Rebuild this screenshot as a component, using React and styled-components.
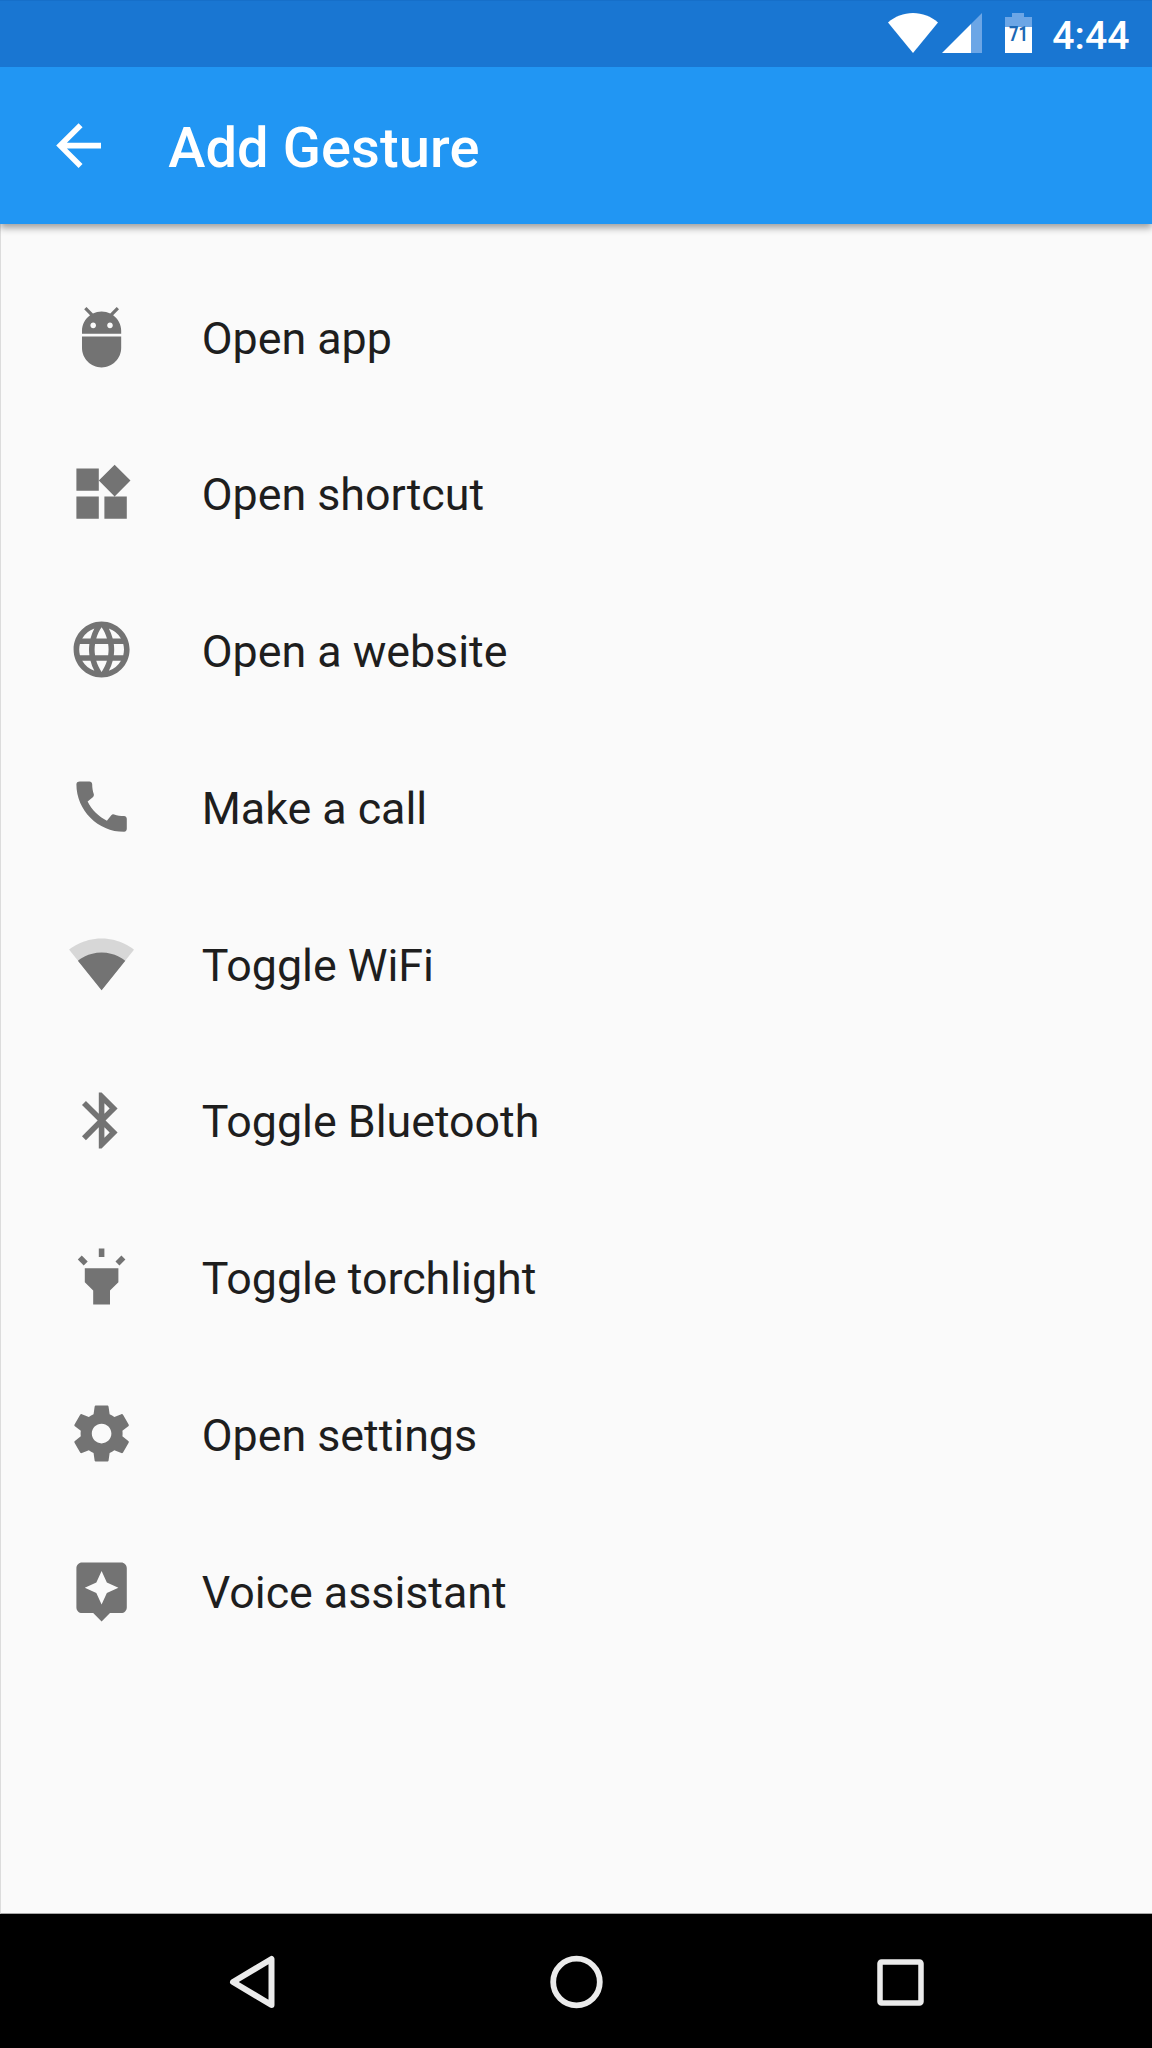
import React from "react";
import styled, { createGlobalStyle } from "styled-components";
import {
  MdAdb,
  MdArrowBack,
  MdAssistant,
  MdBluetooth,
  MdCall,
  MdLanguage,
  MdWidgets,
} from "react-icons/md";

const GlobalStyle = createGlobalStyle`
  body {
    margin: 0;
    background: #fafafa;
    font-family: Roboto, "Noto Sans", sans-serif;
  }

  svg {
    display: block;
    flex-shrink: 0;
  }
`;

const Screen = styled.div`
  box-sizing: border-box;
  display: flex;
  flex-direction: column;
  width: 1152px;
  height: 2048px;
  overflow: hidden;
  background: #fafafa;
`;

const StatusBar = styled.div`
  box-sizing: border-box;
  display: flex;
  justify-content: flex-end;
  height: 67px;
  padding: 13px 22.5px 0 0;
  border-top: 1px solid #166fc9;
  background: #1976d2;
  z-index: 2;
`;

const StatusIcon = styled.svg`
  width: ${(props) => props.$width}px;
  height: 40px;
  margin: -1px ${(props) => props.$gap}px 0 0;
`;

const Clock = styled.span`
  color: #fff;
  font-size: 39.2px;
  font-weight: 500;
  line-height: 44px;
`;

const AppBar = styled.header`
  display: flex;
  align-items: center;
  height: 157px;
  padding-left: 45px;
  color: #fff;
  background: #2196f3;
  box-shadow: 0 4px 7px rgba(0, 0, 0, 0.36);
  z-index: 1;
`;

const Title = styled.h1`
  margin: 5px 0 0 56px;
  font-size: 56px;
  font-weight: 500;
  line-height: 66px;
  letter-spacing: 0.1px;
`;

const List = styled.ul`
  flex: 1;
  margin: 0;
  padding: 34px 0 0 66.8px;
  border-left: 1px solid #dcdcdc;
  border-bottom: 1px solid #a8a8a8;
  list-style: none;
`;

const Row = styled.li`
  display: flex;
  align-items: center;
  height: 156.75px;
  color: #737373;
`;

const Label = styled.span`
  margin: 4.6px 0 0 66.8px;
  color: #1e1e1e;
  font-size: 44.8px;
  line-height: 52px;
  letter-spacing: -0.03px;
`;

const NavBar = styled.nav`
  box-sizing: border-box;
  display: flex;
  height: 134px;
  padding: 1px 90px 0;
  background: #000;
`;

const NavButton = styled.div`
  display: flex;
  align-items: center;
  justify-content: center;
  flex: 1;
  color: #ebebeb;
`;

const ICON_SIZE = 67.2;

const WifiIcon = ({ size }) => (
  <svg width={size} height={size} viewBox="0 0 24 24" fill="currentColor">
    <path
      fillOpacity="0.26"
      d="M23.64 7c-.45-.34-4.93-4-11.64-4C5.28 3 .81 6.66.36 7L12 21.5 23.64 7z"
    />
    <path d="M3.53 10.95l8.46 10.54.01.01.01-.01 8.46-10.54C20.04 10.62 16.81 8 12 8c-4.81 0-8.04 2.62-8.47 2.95z" />
  </svg>
);

const TorchIcon = ({ size }) => (
  <svg width={size} height={size} viewBox="0 0 24 24" fill="currentColor">
    <path d="M6 14l3 3v5h6v-5l3-3V9H6zm5-12h2v3h-2zM3.5 5.875L4.914 4.46l2.12 2.122L5.62 7.997zm13.46.71l2.123-2.12 1.414 1.414L18.375 8z" />
  </svg>
);

const GearIcon = ({ size }) => (
  <svg width={size} height={size} viewBox="0 0 24 24" fill="currentColor">
    <path d="M19.43 12.98c.04-.32.07-.64.07-.98s-.03-.66-.07-.98l2.11-1.65c.19-.15.24-.42.12-.64l-2-3.46c-.12-.22-.39-.3-.61-.22l-2.49 1c-.52-.4-1.08-.73-1.69-.98l-.38-2.65C14.46 2.18 14.25 2 14 2h-4c-.25 0-.46.18-.49.42l-.38 2.65c-.61.25-1.17.59-1.69.98l-2.49-1c-.23-.09-.49 0-.61.22l-2 3.46c-.13.22-.07.49.12.64l2.11 1.65c-.04.32-.07.65-.07.98s.03.66.07.98l-2.11 1.65c-.19.15-.24.42-.12.64l2 3.46c.12.22.39.3.61.22l2.49-1c.52.4 1.08.73 1.69.98l.38 2.65c.03.24.24.42.49.42h4c.25 0 .46-.18.49-.42l.38-2.65c.61-.25 1.17-.59 1.69-.98l2.49 1c.23.09.49 0 .61-.22l2-3.46c.12-.22.07-.49-.12-.64l-2.11-1.65zM12 15.5c-1.93 0-3.5-1.57-3.5-3.5s1.57-3.5 3.5-3.5 3.5 1.57 3.5 3.5-1.57 3.5-3.5 3.5z" />
  </svg>
);

const gestures = [
  { label: "Open app", icon: MdAdb },
  { label: "Open shortcut", icon: MdWidgets },
  { label: "Open a website", icon: MdLanguage },
  { label: "Make a call", icon: MdCall },
  { label: "Toggle WiFi", icon: WifiIcon },
  { label: "Toggle Bluetooth", icon: MdBluetooth },
  { label: "Toggle torchlight", icon: TorchIcon },
  { label: "Open settings", icon: GearIcon },
  { label: "Voice assistant", icon: MdAssistant },
];

const App = () => {
  return (
    <>
      <GlobalStyle />
      <Screen>
        <StatusBar>
          <StatusIcon $width={50} $gap={4} viewBox="0 0 50 40">
            <path fill="#fff" d="M0 9.5C7 3.5 15.5 0 25 0s18 3.5 25 9.5L25 40z" />
          </StatusIcon>
          <StatusIcon $width={40} $gap={23.5} viewBox="0 0 40 40">
            <path fill="#6ca6e6" d="M29 11L40 0v40H29z" />
            <path fill="#fff" d="M0 40L29 11v29z" />
          </StatusIcon>
          <StatusIcon $width={27} $gap={20} viewBox="0 0 27 40">
            <path fill="#6ca6e6" d="M7 0h12v4h8v10H0V4h7z" />
            <path fill="#fff" d="M0 14h27v26H0z" />
            <text
              x="4"
              y="28"
              textLength="19"
              lengthAdjust="spacingAndGlyphs"
              fill="#1b68b5"
              fontSize="20"
              fontWeight="700"
            >
              71
            </text>
          </StatusIcon>
          <Clock>4:44</Clock>
        </StatusBar>
        <AppBar>
          <MdArrowBack size={ICON_SIZE} />
          <Title>Add Gesture</Title>
        </AppBar>
        <List>
          {gestures.map(({ label, icon: Icon }) => (
            <Row key={label}>
              <Icon size={ICON_SIZE} />
              <Label>{label}</Label>
            </Row>
          ))}
        </List>
        <NavBar>
          <NavButton>
            <svg width="46" height="54" viewBox="0 0 46 54">
              <path
                d="M42.5 4v46L4 27z"
                fill="none"
                stroke="currentColor"
                strokeWidth="6"
                strokeLinejoin="round"
              />
            </svg>
          </NavButton>
          <NavButton>
            <svg width="54" height="54" viewBox="0 0 54 54">
              <circle
                cx="27.5"
                cy="27"
                r="23.3"
                fill="none"
                stroke="currentColor"
                strokeWidth="5.8"
              />
            </svg>
          </NavButton>
          <NavButton>
            <svg width="48" height="48" viewBox="0 0 48 48">
              <rect
                x="4"
                y="4"
                width="41"
                height="41"
                rx="1.5"
                fill="none"
                stroke="currentColor"
                strokeWidth="5.5"
              />
            </svg>
          </NavButton>
        </NavBar>
      </Screen>
    </>
  );
};

export default App;
